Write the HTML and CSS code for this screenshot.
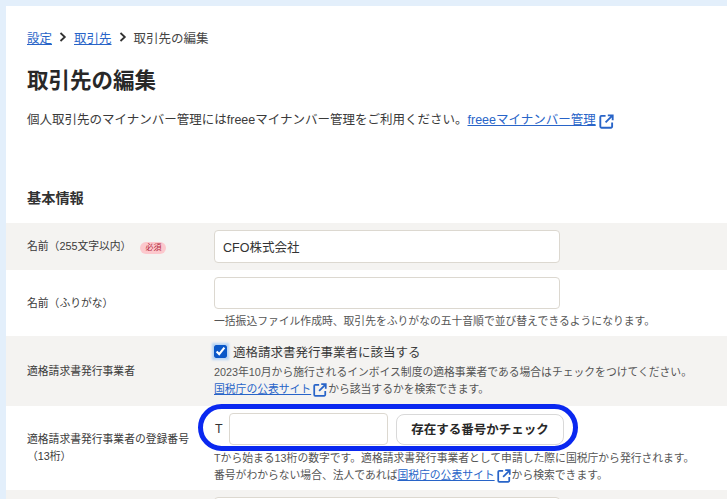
FILE: index.html
```html
<!DOCTYPE html>
<html lang="ja">
<head>
<meta charset="utf-8">
<title>取引先の編集</title>
<link rel="stylesheet" href="styles.css">
</head>
<body>
<svg class="defs" width="0" height="0" aria-hidden="true">
  <symbol id="ext" viewBox="0 0 16 16">
    <path d="M7 2H2.6a1.2 1.2 0 0 0-1.2 1.2v10.2a1.2 1.2 0 0 0 1.2 1.2h10.2a1.2 1.2 0 0 0 1.2-1.2V9" fill="none" stroke="currentColor" stroke-width="2"/>
    <path d="M9.4 1.4h5.2v5.2M14.2 1.8 7 9" fill="none" stroke="currentColor" stroke-width="2"/>
  </symbol>
</svg>
<main class="page">
  <nav class="crumbs">
    <a href="#">設定</a>
    <svg class="chev" viewBox="0 0 8 10"><path d="M1.5 1 5.8 5 1.5 9" fill="none" stroke="currentColor" stroke-width="1.8"/></svg>
    <a href="#">取引先</a>
    <svg class="chev" viewBox="0 0 8 10"><path d="M1.5 1 5.8 5 1.5 9" fill="none" stroke="currentColor" stroke-width="1.8"/></svg>
    <span>取引先の編集</span>
  </nav>
  <h1 class="title">取引先の編集</h1>
  <p class="lead">個人取引先のマイナンバー管理にはfreeeマイナンバー管理をご利用ください。<a href="#" class="lead-link">freeeマイナンバー管理</a><svg class="ext ext-lg"><use href="#ext"/></svg></p>
  <h2 class="section">基本情報</h2>

  <div class="row row-gray row-name">
    <div class="label">名前（255文字以内）<span class="req">必須</span></div>
    <div class="field"><input class="input" type="text" value="CFO株式会社"></div>
  </div>

  <div class="row row-kana">
    <div class="label">名前（ふりがな）</div>
    <div class="field">
      <input class="input input-kana" type="text">
      <p class="hint">一括振込ファイル作成時、取引先をふりがなの五十音順で並び替えできるようになります。</p>
    </div>
  </div>

  <div class="row row-gray row-check">
    <div class="label">適格請求書発行事業者</div>
    <div class="field">
      <label class="check"><input class="checkbox" type="checkbox" checked>適格請求書発行事業者に該当する</label>
      <p class="hint">2023年10月から施行されるインボイス制度の適格事業者である場合はチェックをつけてください。<br><a href="#">国税庁の公表サイト</a><svg class="ext"><use href="#ext"/></svg>から該当するかを検索できます。</p>
    </div>
  </div>

  <div class="row row-number">
    <div class="label">適格請求書発行事業者の登録番号<br>（13桁）</div>
    <div class="field">
      <div class="number-line">
        <span class="prefix">T</span>
        <input class="input input-number" type="text">
        <button class="btn" type="button">存在する番号かチェック</button>
        <span class="highlight"></span>
      </div>
      <p class="hint hint-number">Tから始まる13桁の数字です。適格請求書発行事業者として申請した際に国税庁から発行されます。<br>番号がわからない場合、法人であれば<a href="#">国税庁の公表サイト</a><svg class="ext"><use href="#ext"/></svg>から検索できます。</p>
    </div>
  </div>

  <div class="row row-gray row-last">
    <div class="label"></div>
    <div class="field"><input class="input" type="text"></div>
  </div>
</main>
</body>
</html>
```

FILE: styles.css
```css
* { box-sizing: border-box; }
html, body { margin: 0; height: 100%; overflow: hidden; }
body {
  background: #e3effb;
  padding: 6px 0 0 6px;
  font-family: "Liberation Sans", "Noto Sans CJK JP", sans-serif;
  color: #323232;
}
.defs { position: absolute; }
.page { background: #fff; height: 100%; padding-top: 23px; overflow: hidden; }
a { color: #2864c8; text-decoration: underline; }

.crumbs {
  display: flex;
  align-items: center;
  height: 16px;
  padding-left: 21px;
  font-size: 12.5px;
}
.crumbs span { color: #444; }
.chev { width: 8px; height: 10px; margin: 0 7px; color: #323232; }

.title {
  margin: 21px 0 0 21px;
  font-size: 21.5px;
  line-height: 30px;
  font-weight: 700;
  color: #282828;
}
.lead {
  margin: 15px 0 0 21px;
  font-size: 12.5px;
  line-height: 18px;
  color: #3a3a3a;
  display: flex;
  align-items: center;
}
.lead-link { margin-left: 0; }
.ext { width: 14px; height: 14px; color: #2864c8; margin: 0 1px 0 2px; vertical-align: -4px; }
.ext-lg { width: 15px; height: 15px; margin: 3px 0 0 3px; }

.section {
  margin: 59px 0 0 21px;
  font-size: 14.2px;
  line-height: 20px;
  font-weight: 700;
  color: #323232;
}

.row {
  display: grid;
  grid-template-columns: 187px 1fr;
  padding-left: 21px;
  align-items: center;
}
.row-gray { background: #f4f3f1; }
.row-name { margin-top: 15px; height: 47px; }
.row-kana { height: 66px; padding-top: 7px; align-items: start; }
.row-check { height: 70px; padding-top: 7px; align-items: start; }
.row-number { height: 84px; padding-top: 7px; align-items: start; }
.row-last { height: 9px; padding-top: 7px; align-items: start; overflow: hidden; }

.label { font-size: 10.8px; line-height: 17px; color: #3a3a3a; }
.row-kana .label { margin-top: 18px; }
.row-check .label { margin-top: 20px; }
.row-number .label { margin-top: 18px; }
.req {
  display: inline-block;
  margin-left: 9px;
  padding: 0 5px;
  height: 12px;
  line-height: 12px;
  font-size: 8px;
  border-radius: 6px;
  background: #fcc8cd;
  color: #b4283c;
  vertical-align: 0;
}

.input {
  display: block;
  width: 346px;
  height: 33px;
  padding: 0 8px 1px;
  border: 1px solid #dcd8d0;
  border-radius: 4px;
  background: #fff;
  font: inherit;
  font-size: 12.5px;
  color: #323232;
  outline: none;
}
.input-kana { height: 32px; }

.hint { margin: 0; font-size: 10.8px; line-height: 17px; color: #555; }
.row-kana .hint { margin-top: 4px; }

.check {
  display: flex;
  align-items: center;
  height: 16px;
  font-size: 12.5px;
  color: #3a3a3a;
}
.checkbox {
  width: 13px;
  height: 13px;
  margin: 0 6px 0 0;
  accent-color: #0a57c8;
  box-shadow: 0 0 2px 2px #b6d4f5;
  border-radius: 3px;
}
.row-check .hint { margin-top: 5px; }

.number-line {
  position: relative;
  display: flex;
  align-items: center;
  height: 32px;
}
.prefix { width: 15px; padding-left: 1px; font-size: 12.5px; color: #323232; }
.input-number { width: 159px; height: 32px; }
.btn {
  width: 168px;
  height: 31px;
  margin-left: 8px;
  padding-bottom: 2px;
  border: 1px solid #d9d9d9;
  border-radius: 8px;
  background: #fff;
  font: inherit;
  font-size: 12.5px;
  font-weight: 700;
  color: #282828;
}
.highlight {
  position: absolute;
  left: -16px;
  top: -9px;
  width: 380px;
  height: 47px;
  border: 5px solid #0a28f0;
  border-radius: 24px;
}
.hint-number { margin-top: 5px; }
```
